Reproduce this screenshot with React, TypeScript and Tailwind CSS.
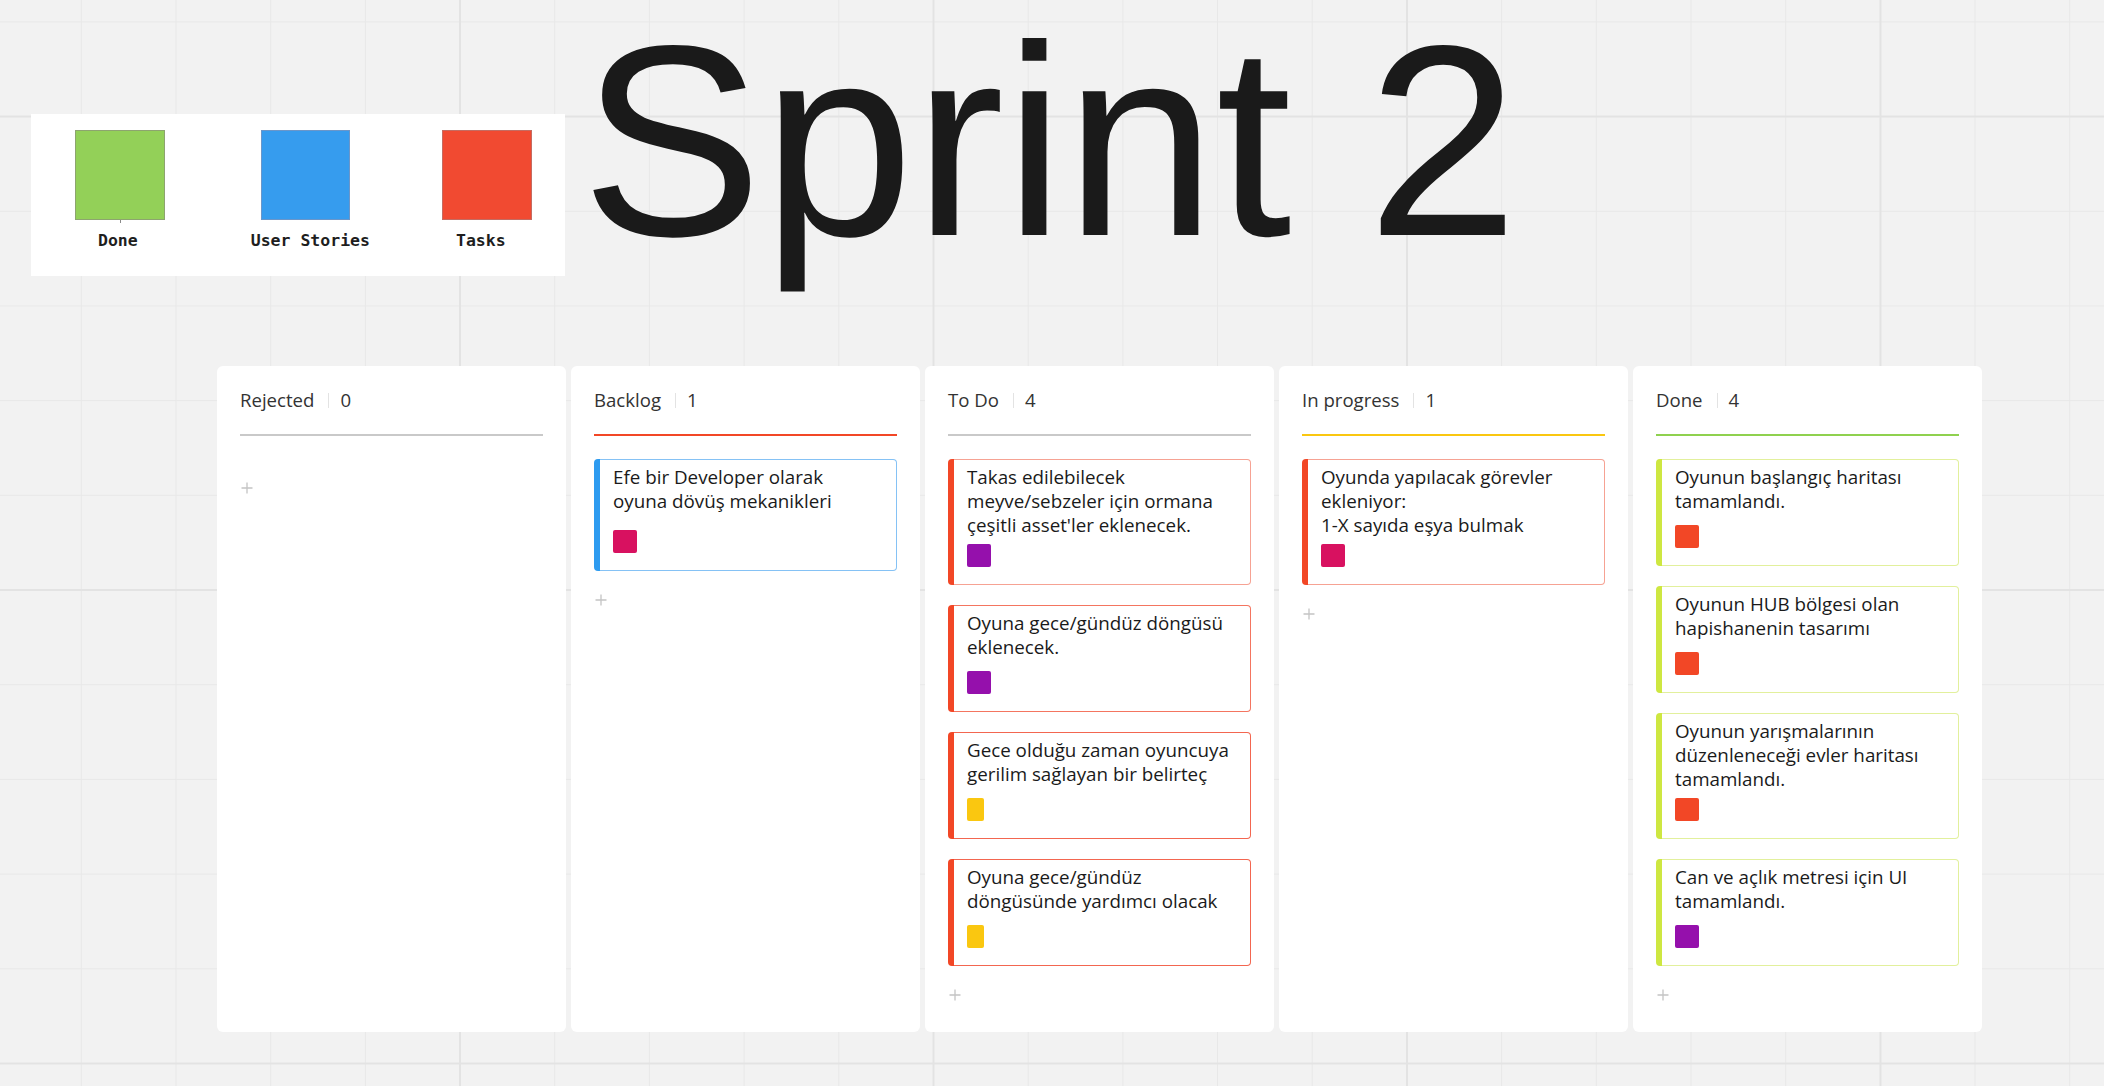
import React from 'react';

type CardData = {
  lines: string[];
  bar: string;
  border: string;
  tag: string;
  narrow?: boolean;
  tall?: boolean;
};

type ColumnData = {
  title: string;
  line: string;
  cards: CardData[];
};

const COLUMNS: ColumnData[] = [
  { title: 'Rejected', line: 'bg-[#c9c9c9]', cards: [] },
  {
    title: 'Backlog',
    line: 'bg-[#f24726]',
    cards: [
      {
        lines: ['Efe bir Developer olarak', 'oyuna dövüş mekanikleri'],
        bar: 'bg-[#2d9bf0]',
        border: 'border-[#85c2f5]',
        tag: 'bg-[#d81160]',
        tall: true,
      },
    ],
  },
  {
    title: 'To Do',
    line: 'bg-[#c9c9c9]',
    cards: [
      {
        lines: ['Takas edilebilecek', 'meyve/sebzeler için ormana', "çeşitli asset'ler eklenecek."],
        bar: 'bg-[#f24726]',
        border: 'border-[#f6a293]',
        tag: 'bg-[#9510ac]',
      },
      {
        lines: ['Oyuna gece/gündüz döngüsü', 'eklenecek.'],
        bar: 'bg-[#f24726]',
        border: 'border-[#f47560]',
        tag: 'bg-[#9510ac]',
      },
      {
        lines: ['Gece olduğu zaman oyuncuya', 'gerilim sağlayan bir belirteç'],
        bar: 'bg-[#f24726]',
        border: 'border-[#f36650]',
        tag: 'bg-[#fac710]',
        narrow: true,
      },
      {
        lines: ['Oyuna gece/gündüz', 'döngüsünde yardımcı olacak'],
        bar: 'bg-[#f24726]',
        border: 'border-[#f36650]',
        tag: 'bg-[#fac710]',
        narrow: true,
      },
    ],
  },
  {
    title: 'In progress',
    line: 'bg-[#fac710]',
    cards: [
      {
        lines: ['Oyunda yapılacak görevler', 'ekleniyor:', '1-X sayıda eşya bulmak'],
        bar: 'bg-[#f24726]',
        border: 'border-[#f6a293]',
        tag: 'bg-[#d81160]',
      },
    ],
  },
  {
    title: 'Done',
    line: 'bg-[#8fd14f]',
    cards: [
      {
        lines: ['Oyunun başlangıç haritası', 'tamamlandı.'],
        bar: 'bg-[#cee741]',
        border: 'border-[#e2f09c]',
        tag: 'bg-[#f24726]',
      },
      {
        lines: ['Oyunun HUB bölgesi olan', 'hapishanenin tasarımı'],
        bar: 'bg-[#cee741]',
        border: 'border-[#e2f09c]',
        tag: 'bg-[#f24726]',
      },
      {
        lines: ['Oyunun yarışmalarının', 'düzenleneceği evler haritası', 'tamamlandı.'],
        bar: 'bg-[#cee741]',
        border: 'border-[#e2f09c]',
        tag: 'bg-[#f24726]',
      },
      {
        lines: ['Can ve açlık metresi için UI', 'tamamlandı.'],
        bar: 'bg-[#cee741]',
        border: 'border-[#e2f09c]',
        tag: 'bg-[#9510ac]',
      },
    ],
  },
];

function PlusIcon() {
  return (
    <svg width="12" height="12" viewBox="0 0 12 12" className="ml-px">
      <path d="M6 0.5v11M0.5 6h11" stroke="#c4c4c4" strokeWidth="1.3" fill="none" />
    </svg>
  );
}

function Card({ card }: { card: CardData }) {
  return (
    <div className="flex">
      <div className={`w-[6px] shrink-0 rounded-l-[4px] ${card.bar}`} />
      <div className={`flex-1 rounded-r-[4px] border border-l-0 pl-[13px] pr-2 pt-[6px] pb-[17px] ${card.border}`}>
        <div className={`text-[18.8px] leading-[23.8px] text-[#1a1a1a] ${card.tall ? 'min-h-[57px]' : 'min-h-[52px]'}`}>
          {card.lines.map((l) => (
            <div key={l} className="whitespace-nowrap">
              {l}
            </div>
          ))}
        </div>
        <div className={`mt-[7px] h-[23px] rounded-[2px] ${card.tag} ${card.narrow ? 'w-[17px]' : 'w-[24px]'}`} />
      </div>
    </div>
  );
}

function Column({ col }: { col: ColumnData }) {
  return (
    <div className="flex h-[666px] w-[349px] shrink-0 flex-col rounded-[6px] bg-white px-[23px]">
      {/* Header */}
      <div className="mt-[22px] flex h-[24px] items-center text-[18.6px] leading-[24px] text-[#333333]">
        <span>{col.title}</span>
        <span className="ml-[14px] mr-[11px] h-[15px] w-px bg-[#e3e3e3]" />
        <span>{col.cards.length}</span>
      </div>
      <div className={`mt-[22px] h-[2px] ${col.line}`} />

      {/* Cards */}
      <div className="flex flex-col gap-[20px] pt-[23px]">
        {col.cards.map((c, i) => (
          <Card key={i} card={c} />
        ))}
      </div>

      <div className="mt-[21px] flex h-4 items-center">
        <PlusIcon />
      </div>
    </div>
  );
}

function Legend() {
  return (
    <div className="ml-[31px] mt-[114px] h-[162px] w-[534px] shrink-0 bg-white pt-[16px] font-['DejaVu_Sans_Mono',monospace] text-[16.5px] font-bold leading-[20px] text-[#1e1e1e]">
      <div className="flex pl-[44px]">
        <div className="relative h-[89.5px] w-[89.5px] border border-[#8da46f] bg-[#93d058]">
          <div className="absolute -bottom-[4px] left-1/2 h-[3px] w-px bg-[#8a8a8a]" />
        </div>
        <div className="ml-[96px] h-[89.5px] w-[89.5px] border border-[#6b96c9] bg-[#369cee]" />
        <div className="ml-[92px] h-[89.5px] w-[89.5px] border border-[#c46c62] bg-[#f14a31]" />
      </div>
      <div className="mt-[11.5px] flex whitespace-nowrap">
        <span className="ml-[67px]">Done</span>
        <span className="ml-[113px]">User Stories</span>
        <span className="ml-[86px]">Tasks</span>
      </div>
    </div>
  );
}

export default function App() {
  return (
    <div
      className="h-screen w-full overflow-hidden bg-[#f2f2f2] font-['Open_Sans',sans-serif]
        [background-image:linear-gradient(to_right,#e3e3e3_2px,transparent_2px),linear-gradient(to_bottom,#e3e3e3_2px,transparent_2px),linear-gradient(to_right,#e8e8e8_1px,transparent_1px),linear-gradient(to_bottom,#e8e8e8_1px,transparent_1px)]
        [background-size:473.5px_473.5px,473.5px_473.5px,94.7px_94.7px,94.7px_94.7px]
        [background-position:459px_0,0_115.5px,80.8px_0,0_21.4px]"
    >
      {/* Top: legend + title */}
      <div className="flex items-start">
        <Legend />
        <div className="-mt-[11px] ml-[16px] whitespace-nowrap font-['Liberation_Sans',Arial,sans-serif] text-[272px] leading-[304px] text-[#1a1a1a]">
          Sprint 2
        </div>
      </div>

      {/* Board */}
      <div className="ml-[217px] mt-[73px] flex gap-[5px]">
        {COLUMNS.map((c) => (
          <Column key={c.title} col={c} />
        ))}
      </div>
    </div>
  );
}
